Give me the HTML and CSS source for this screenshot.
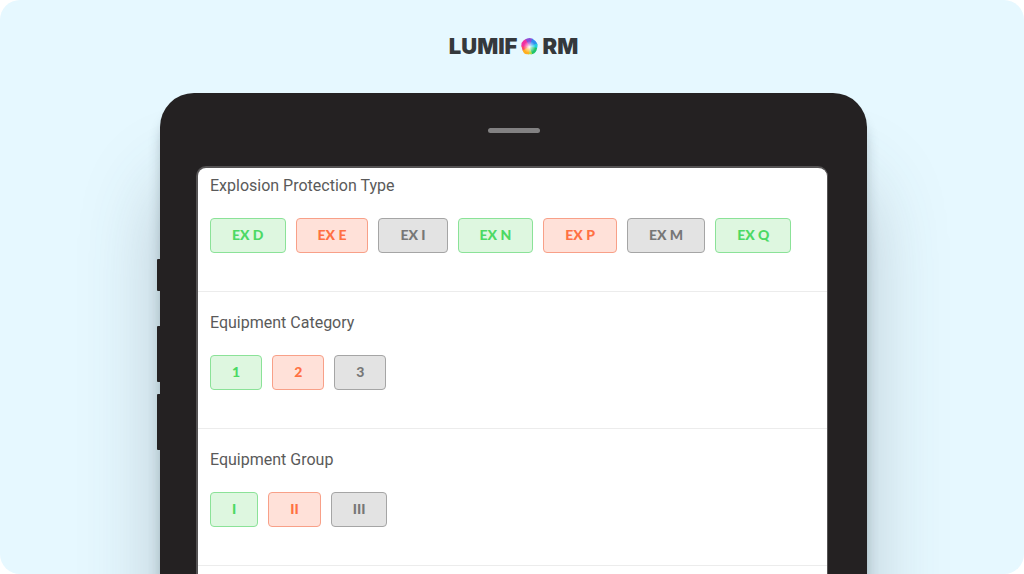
FILE: index.html
```html
<!DOCTYPE html>
<html lang="en">
<head>
<meta charset="utf-8">
<title>Lumiform</title>
<meta name="viewport" content="width=device-width, initial-scale=1">
<link rel="stylesheet" href="styles.css">
</head>
<body>
<div class="stage">
  <header class="brand" aria-label="Lumiform">
    <span>LUMIF</span>
    <svg class="orb" viewBox="0 0 34 34" aria-hidden="true">
      <defs>
        <radialGradient id="glow"><stop offset="0" stop-color="#fff" stop-opacity=".95"/><stop offset=".35" stop-color="#fff" stop-opacity=".6"/><stop offset="1" stop-color="#fff" stop-opacity="0"/></radialGradient>
        <clipPath id="disc"><path d="M12 1Q17-1 22 1L29 6Q34 11 33 17L31 25Q28 32 20 33L12 33Q5 32 3 24L1 17Q0 9 5 5Z"/></clipPath>
      </defs>
      <g clip-path="url(#disc)">
        <path fill="#8b4fd8" d="M17 17L5 0H26Z"/>
        <path fill="#2f8df0" d="M17 17L23 0H34V14Z"/>
        <path fill="#20cfe0" d="M17 17L34 10V22Z"/>
        <path fill="#1fc46c" d="M17 17L34 20V34H20Z"/>
        <path fill="#b5dc45" d="M17 17L23 34H14Z"/>
        <path fill="#ffb020" d="M17 17L16 34H0V25Z"/>
        <path fill="#ff4a62" d="M17 17L0 27V15Z"/>
        <path fill="#f130a0" d="M17 17L0 17V0H8Z"/>
        <circle cx="17" cy="18" r="12" fill="url(#glow)"/>
      </g>
    </svg>
    <span>RM</span>
  </header>
  <main class="tablet">
    <i class="key key-mute"></i>
    <i class="key key-up"></i>
    <i class="key key-down"></i>
    <div class="speaker"></div>
    <div class="screen">
      <section class="field" aria-labelledby="type">
        <h2 class="label" id="type">Explosion Protection Type</h2>
        <div class="chips">
          <button class="chip green">EX D</button>
          <button class="chip red">EX E</button>
          <button class="chip gray">EX I</button>
          <button class="chip green">EX N</button>
          <button class="chip red">EX P</button>
          <button class="chip gray">EX M</button>
          <button class="chip green">EX Q</button>
        </div>
      </section>
      <section class="field" aria-labelledby="category">
        <h2 class="label" id="category">Equipment Category</h2>
        <div class="chips">
          <button class="chip green">1</button>
          <button class="chip red">2</button>
          <button class="chip gray">3</button>
        </div>
      </section>
      <section class="field" aria-labelledby="group">
        <h2 class="label" id="group">Equipment Group</h2>
        <div class="chips">
          <button class="chip green">I</button>
          <button class="chip red">II</button>
          <button class="chip gray">III</button>
        </div>
      </section>
    </div>
  </main>
</div>
</body>
</html>
```
FILE: styles.css
```css
* { box-sizing: border-box; }
body { margin: 0; background: #fff; }
.stage {
  height: 100vh;
  overflow: hidden;
  display: flex;
  flex-direction: column;
  padding: 32px 157px 0 160px;
  border-radius: 20px;
  background: #e6f8ff;
}
.brand {
  display: flex;
  flex: none;
  justify-content: center;
  align-items: center;
  gap: 4px;
  height: 29px;
  margin-bottom: 32px;
  font: 900 22px/29px Inter, sans-serif;
  color: #35393c;
}
.orb { width: 17px; height: 17px; }
.tablet {
  position: relative;
  flex: 1 0 auto;
  display: flex;
  flex-direction: column;
  padding-top: 35px;
  border-radius: 34px 34px 0 0;
  background: #242122;
  box-shadow: 0 16px 12px rgba(40, 60, 70, .25), 0 90px 80px rgba(60, 80, 90, .28);
}
.key {
  position: absolute;
  left: -3px;
  width: 4px;
  height: 56px;
  border-radius: 1px 0 0 1px;
  background: #242122;
}
.key-mute { top: 166px; height: 32px; }
.key-up { top: 233px; }
.key-down { top: 301px; }
.speaker {
  width: 52px;
  height: 5px;
  margin: 0 auto 33px;
  border-radius: 3px;
  background: #828182;
}
.screen {
  flex: 1;
  margin: 0 39px 0 36px;
  border: 2px solid #555354;
  border-right-width: 1px;
  border-bottom: 0;
  border-radius: 10px 10px 0 0;
  background: #fff;
}
.field {
  padding: 20px 12px 38px;
  border-bottom: 1px solid #ececec;
}
.field:first-child { padding-top: 7px; }
.label {
  margin: 0 0 21px;
  font: 400 16px/22px Roboto, sans-serif;
  color: #5a5a5a;
}
.chips { display: flex; flex-wrap: wrap; gap: 10px; }
.chip {
  height: 35px;
  padding: 0 21px 2px;
  border: 1px solid;
  border-radius: 4px;
  font: 900 14px/20px Lato, sans-serif;
}
.green { color: #4cd964; border-color: #8be298; background: #def7e0; }
.red { color: #ff7043; border-color: #f8a088; background: #ffe1d9; }
.gray { color: #777; border-color: #a5a5a5; background: #e3e3e3; }
```
